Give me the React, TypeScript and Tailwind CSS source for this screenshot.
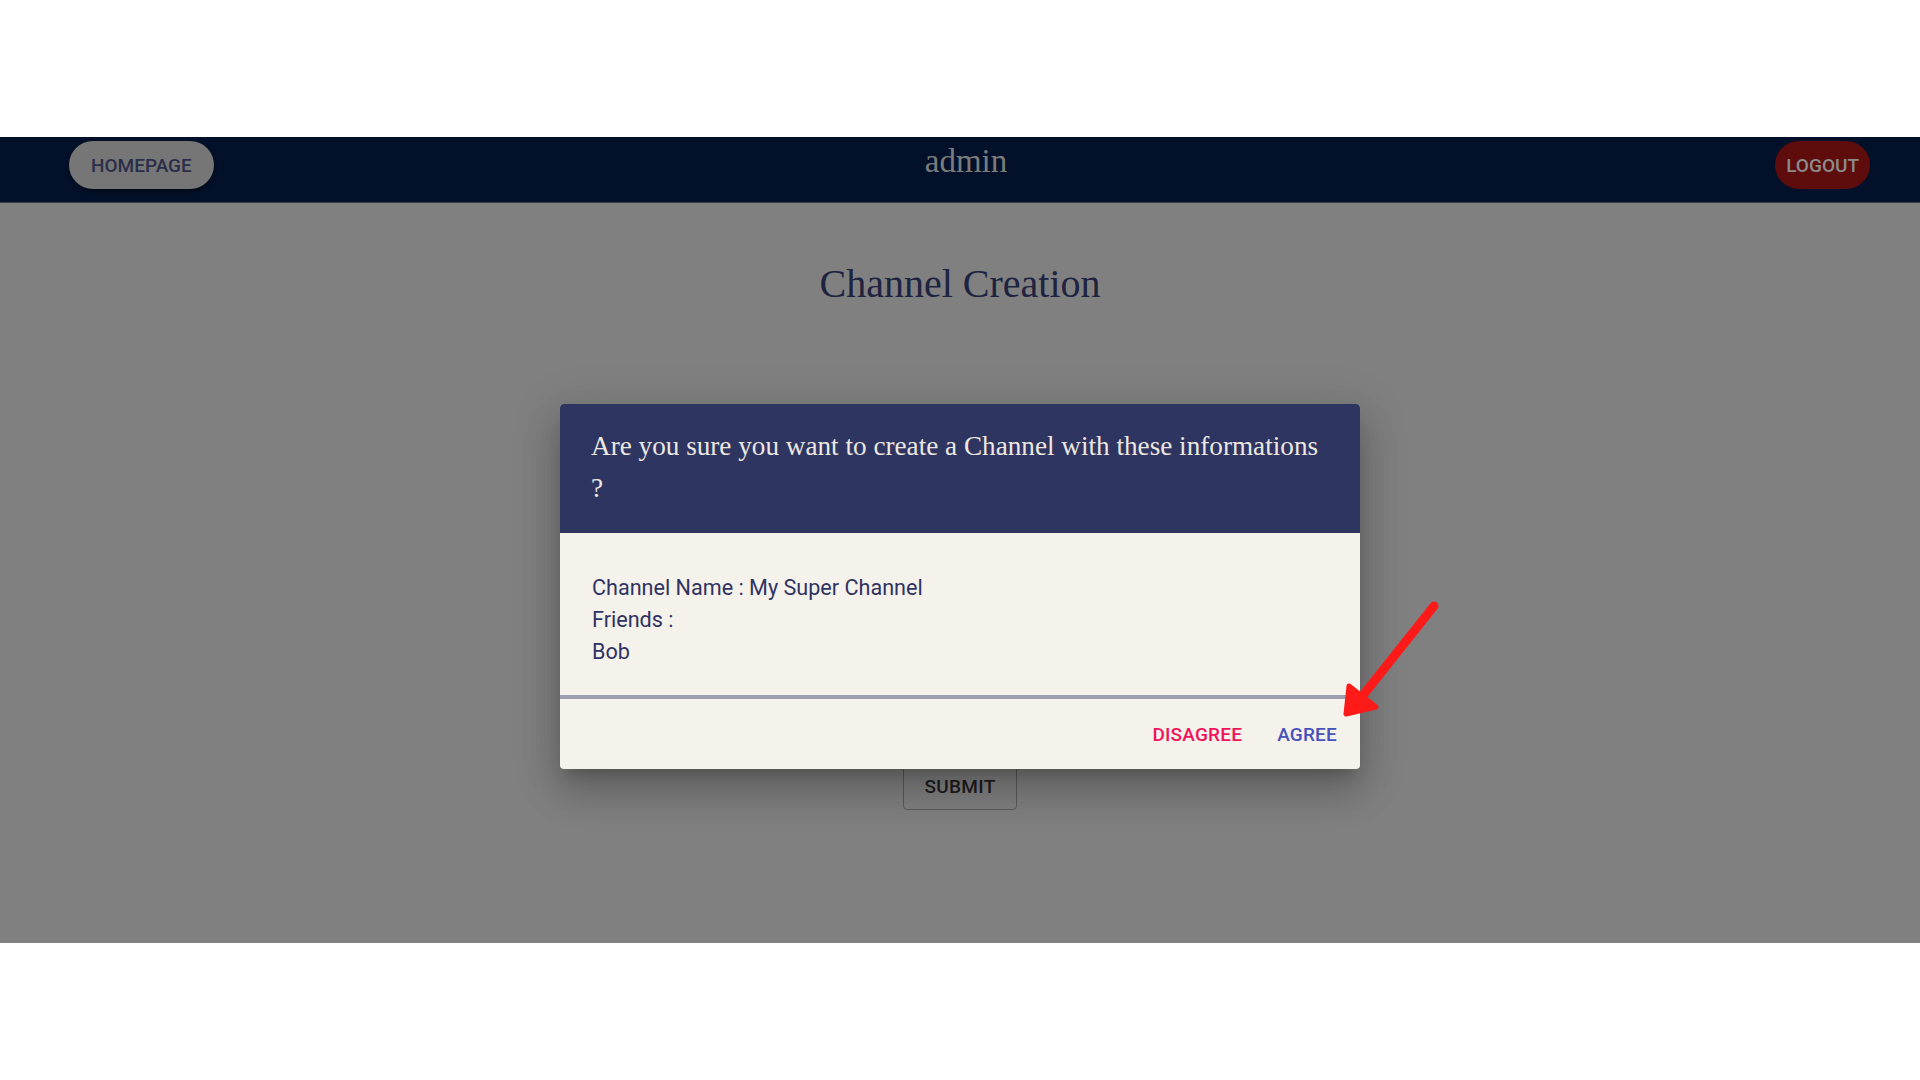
import React from "react";

const serif = { fontFamily: '"Liberation Serif", "Times New Roman", serif' };
const sans = { fontFamily: 'Roboto, "Noto Sans", Arial, sans-serif' };

export default function App() {
  return (
    <div className="relative w-full h-screen bg-white pt-[137px] overflow-hidden">
      <div className="relative h-[806px] flex flex-col bg-[#808080]">
        {/* Navbar */}
        <div className="h-[66px] bg-[#031029] border-b border-[#3a3f4b] flex items-start pt-[4px] pl-[69px] pr-[50px]">
          <button
            style={sans}
            className="h-[48px] px-[22px] rounded-full bg-[#767676] text-[#2b2e4a] text-[19px] font-medium leading-none shadow-[0_3px_4px_rgba(0,0,0,0.35)]"
          >
            HOMEPAGE
          </button>
          <div className="flex-1 flex justify-center pr-[57px]">
            <span style={serif} className="text-[33px] leading-[40px] text-[#7b7b7b]">
              admin
            </span>
          </div>
          <button
            style={sans}
            className="h-[48px] px-[11px] rounded-full bg-[#5e0c0c] text-[#8c8c8c] text-[19px] font-medium leading-none"
          >
            LOGOUT
          </button>
        </div>

        {/* Main content */}
        <div className="flex-1 flex flex-col items-center pt-[57px]">
          <h1 style={serif} className="text-[40px] leading-[48px] text-[#1e2340]">
            Channel Creation
          </h1>
          <button
            style={sans}
            className="mt-[456px] border border-[#5a5a5a] rounded-[4px] px-[20px] py-[10px] text-[19px] leading-[24px] font-medium tracking-[0.3px] text-[#1d1d1d]"
          >
            SUBMIT
          </button>
        </div>

        {/* Dialog */}
        <div className="absolute left-[560px] top-[267px] w-[800px] rounded-[4px] overflow-hidden bg-[#f5f1eb] shadow-[0_11px_15px_-7px_rgba(0,0,0,0.2),0_24px_38px_3px_rgba(0,0,0,0.14),0_9px_46px_8px_rgba(0,0,0,0.12)]">
          <div style={serif} className="bg-[#2f3561] px-[31px] pt-[21px] pb-[24px] text-[27.2px] leading-[42px] text-[#ece8e1]">
            Are you sure you want to create a Channel with these informations
            <br />?
          </div>
          <div style={sans} className="px-[32px] pt-[39px] pb-[27px] text-[21.6px] leading-[32px] text-[#2f3361]">
            <div>Channel Name : My Super Channel</div>
            <div>Friends :</div>
            <div>Bob</div>
          </div>
          <div className="h-[4px] bg-[#9d9fb0]" />
          <div style={sans} className="h-[70px] flex justify-end items-start pt-[24px] pr-[15px] gap-[19px]">
            <button className="px-[8px] text-[19px] leading-[24px] font-medium tracking-[0.2px] text-[#f0135a]">
              DISAGREE
            </button>
            <button className="px-[8px] text-[19px] leading-[24px] font-medium tracking-[0.2px] text-[#4652bb]">
              AGREE
            </button>
          </div>
        </div>
      </div>

      {/* Red annotation arrow */}
      <svg
        className="absolute left-[1330px] top-[590px]"
        width="120"
        height="140"
        viewBox="0 0 120 140"
      >
        <line x1="104" y1="16" x2="34" y2="104" stroke="#ff1a1a" strokeWidth="9" strokeLinecap="round" />
        <polygon
          points="19,96 46,117 16,124"
          fill="#ff1a1a"
          stroke="#ff1a1a"
          strokeWidth="5"
          strokeLinejoin="round"
        />
      </svg>
    </div>
  );
}
